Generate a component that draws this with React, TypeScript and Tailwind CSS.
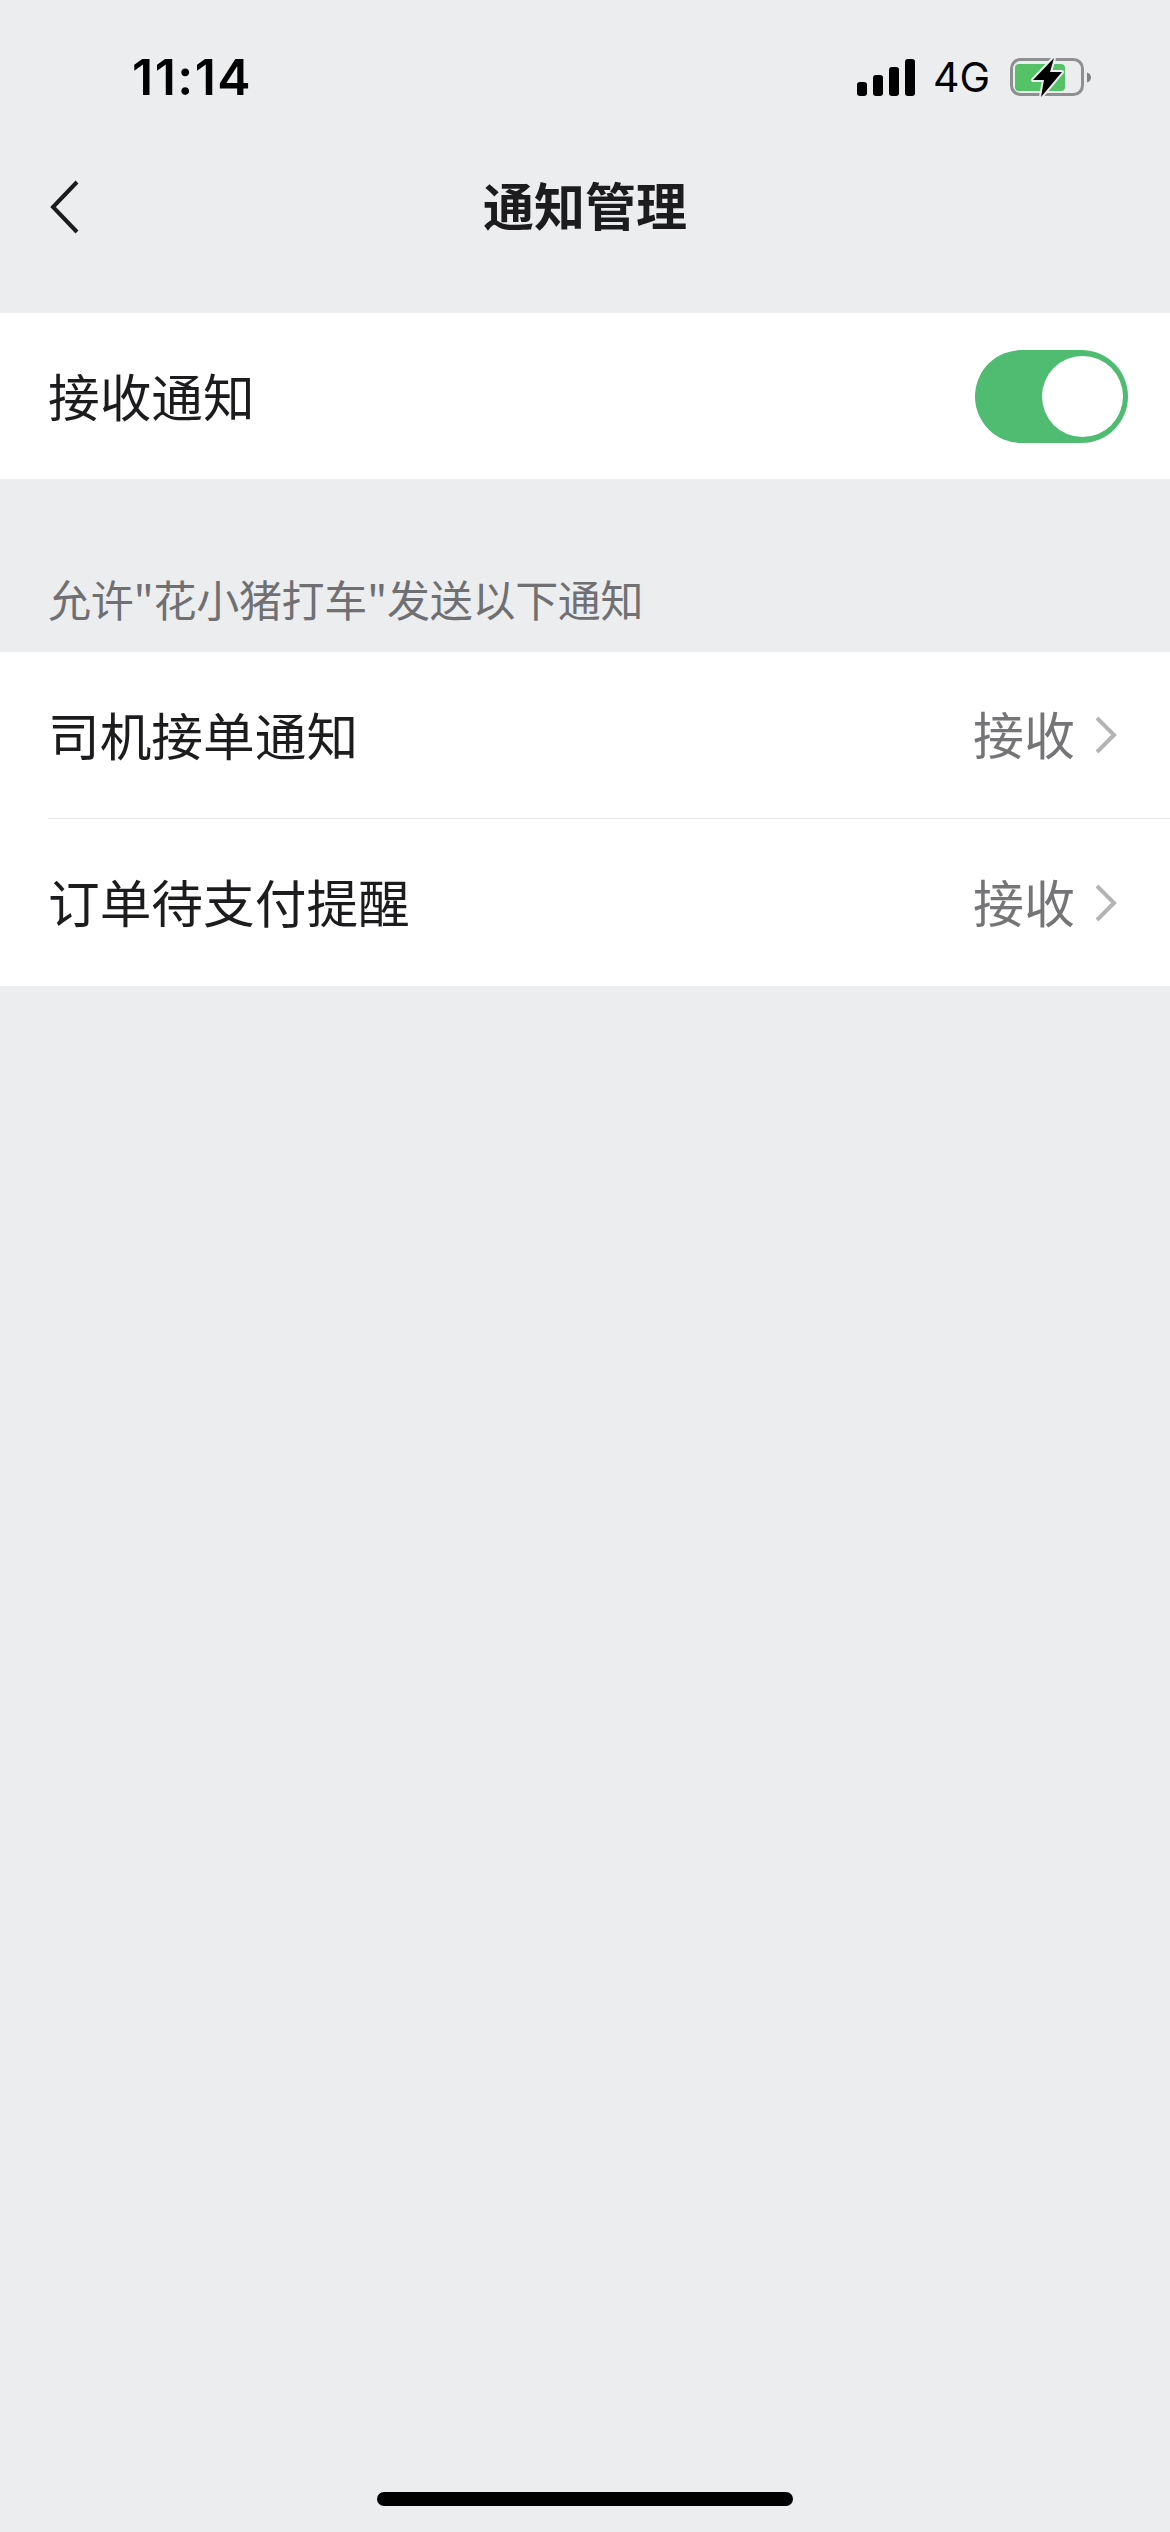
const cjk = "font-['Noto_Sans_CJK_SC','Noto_Sans',sans-serif]";

function SignalBars() {
    return (
        <div className="flex items-end gap-[6px] w-[58px] h-[38px]">
            <div className="w-[10px] h-[14px] rounded-[3px] bg-black" />
            <div className="w-[10px] h-[21px] rounded-[3px] bg-black" />
            <div className="w-[10px] h-[29px] rounded-[3px] bg-black" />
            <div className="w-[10px] h-[37px] rounded-[3px] bg-black" />
        </div>
    );
}

function Battery() {
    return (
        <svg width="86" height="46" viewBox="0 0 86 46" fill="none">
            <rect x="3.500" y="5.500" width="71" height="35" rx="9" stroke="#8e8f91" strokeWidth="3" />
            <rect x="7" y="10" width="50" height="27" rx="4" fill="#55c267" />
            <path d="M79 18.500c2.500 .5 4 2.500 4 5s-1.500 4.500-4 5z" fill="#808183" />
            <path d="M46 4 L25 26 H36 L33 43 L54 18 H42 Z" fill="#000" stroke="#ecedef" strokeWidth="4" strokeLinejoin="round" paintOrder="stroke" />
        </svg>
    );
}

function Row({ label, value, divider }: { label: string; value: string; divider?: boolean }) {
    return (
        <div className="pl-12 bg-white">
            <div className={`flex items-center justify-between h-[167px] pr-[53px] ${divider ? "border-b border-[#e6e6e8]" : ""}`}>
                <span className="text-[51.700px] leading-none text-[#1c1c1e] pb-[3px]">{label}</span>
                <div className="flex items-center gap-[20px]">
                    <span className="text-[51px] leading-none text-[#757578] pb-[3px]">{value}</span>
                    <svg width="22" height="38" viewBox="0 0 22 38" fill="none">
                        <path d="M2 2 L19 19 L2 36" stroke="#b4b4b6" strokeWidth="4" />
                    </svg>
                </div>
            </div>
        </div>
    );
}

export default function App() {
    return (
        <div className={`w-[1170px] h-[2532px] bg-[#ecedef] flex flex-col ${cjk}`}>
            <div className="h-[155px] flex items-start justify-between pl-[132px] pr-[76px] pt-[47px]">
                <span className="text-[50px] leading-[60px] font-semibold text-black font-['Inter',sans-serif] tracking-[1.500px]">11:14</span>
                <div className="flex items-center h-[60px]">
                    <SignalBars />
                    <span className="ml-[18px] mr-[18px] text-[41px] leading-none text-black font-['Inter',sans-serif]">4G</span>
                    <Battery />
                </div>
            </div>

            <div className="h-[104px] relative flex items-center justify-center">
                <svg className="absolute left-[50px] top-[25px]" width="30" height="54" viewBox="0 0 30 54" fill="none">
                    <path d="M27 2 L3 27 L27 52" stroke="#1c1c1e" strokeWidth="4" />
                </svg>
                <span className="text-[51px] leading-none font-bold text-[#1c1c1e] -mt-[6px]">通知管理</span>
            </div>

            <div className="mt-[54px] h-[166px] bg-white flex items-center justify-between pl-12 pr-[42px]">
                <span className="text-[51.700px] leading-none text-[#1c1c1e] pb-[3px]">接收通知</span>
                <div className="w-[153px] h-[93px] rounded-full bg-[#4fbc72] flex items-center justify-end pr-[5px]">
                    <div className="w-[81px] h-[81px] rounded-full bg-white" />
                </div>
            </div>

            <div className="h-[173px] flex items-end pl-12 pb-[32px]">
                <span className="text-[43px] leading-none text-[#707073] tracking-[-0.300px]">允许"花小猪打车"发送以下通知</span>
            </div>

            <Row label="司机接单通知" value="接收" divider />
            <Row label="订单待支付提醒" value="接收" />

            <div className="mt-auto mb-[26px] self-center w-[416px] h-[14px] rounded-full bg-black" />
        </div>
    );
}
